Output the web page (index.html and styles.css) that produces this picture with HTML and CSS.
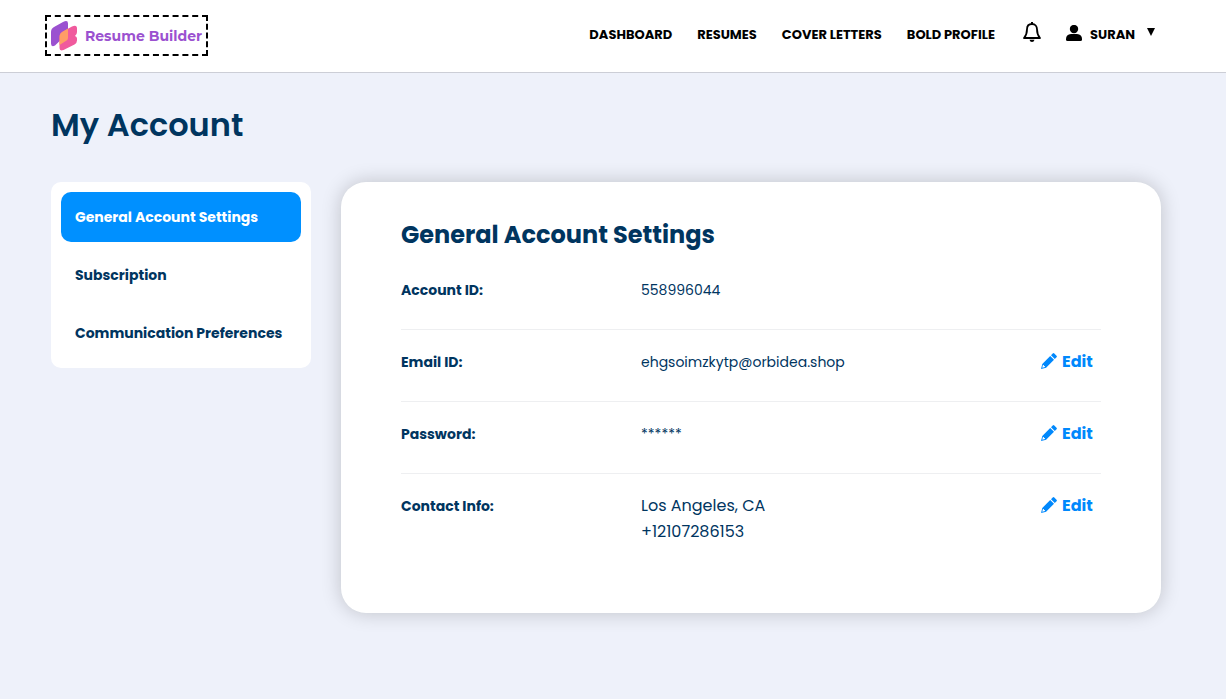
FILE: index.html
```html
<!DOCTYPE html>
<html lang="en">
<head>
    <meta charset="UTF-8">
    <meta name="viewport" content="width=device-width, initial-scale=1.0">
    <title>My Account</title>
    <link rel="stylesheet" href="styles.css">
</head>
<body>
    <!-- icons shared by the page -->
    <svg class="sprite" aria-hidden="true">
        <symbol id="pencil" viewBox="0 0 16 16">
            <path fill="currentColor" fill-rule="evenodd" d="M9.2 3 13 6.8 5.1 14.7 0 16l1.3-5.1zM1.9 12.1l-.6 2.6 2.6-.6v-1.2H2.9v-.8z"/>
            <path fill="currentColor" d="M10 2.2 11.7.5q.8-.8 1.6 0l2.2 2.2q.8.8 0 1.6L13.8 6z"/>
        </symbol>
    </svg>

    <header class="header">
        <a href="#" class="logo">
            <svg class="logo-mark" viewBox="0 0 26 30" aria-hidden="true">
                <path fill="#9b51d0" d="M3 6 12 1q5-2.500 5 1.500V12L4 24.500q-4 2-4-2V11q0-3.500 3-5z"/>
                <path fill="#f05a9d" d="M11 11 21 5.500q5-2 5 2V11q0 2.500-2 4 2 .5 2 2.500v2q0 2.500-2.500 4l-11 5.500q-4 1.500-4-2V15q0-3 2.500-4z"/>
                <path fill="#ff9d66" d="M11.500 10.700l5.500-3.200V17q0 1.500-1.500 2.500l-7 4.500v-8q0-3.500 3-5.300z"/>
            </svg>
            <span>Resume Builder</span>
        </a>
        <nav class="nav">
            <a href="#">DASHBOARD</a>
            <a href="#">RESUMES</a>
            <a href="#">COVER LETTERS</a>
            <a href="#">BOLD PROFILE</a>
        </nav>
        <button type="button" class="bell" aria-label="Notifications">
            <svg viewBox="0 0 18 20" width="18" height="20" aria-hidden="true">
                <path fill="none" stroke="#000" stroke-width="1.800" stroke-linejoin="round" d="M9 2C5.800 2 4 4.300 4 7.200c0 3.800-.7 6.200-3 8.800h16c-2.300-2.600-3-5-3-8.800C14 4.300 12.200 2 9 2z"/>
                <path d="M8 0h2v2H8zM6.500 17.800h5Q11 20 9 20t-2.500-2.200z"/>
            </svg>
        </button>
        <button type="button" class="user">
            <svg class="avatar" viewBox="0 0 16 16" width="16" height="16" aria-hidden="true">
                <circle cx="8" cy="4" r="4.200"/>
                <path d="M5 9h6q5 .5 5 5v.5q0 1.500-1.500 1.500h-13Q0 16 0 14.500V14q0-4.500 5-5z"/>
            </svg>
            <span>SURAN</span>
            <svg class="caret" viewBox="0 0 8 8" width="8" height="8" aria-hidden="true">
                <path d="M0 0h8L4 8z"/>
            </svg>
        </button>
    </header>

    <main class="page">
        <h1>My Account</h1>
        <div class="columns">
            <nav class="side-menu">
                <a href="#" class="active">General Account Settings</a>
                <a href="#">Subscription</a>
                <a href="#">Communication Preferences</a>
            </nav>
            <section class="card">
                <h2>General Account Settings</h2>
                <dl class="settings">
                    <div class="row">
                        <dt>Account ID:</dt>
                        <dd>558996044</dd>
                    </div>
                    <div class="row">
                        <dt>Email ID:</dt>
                        <dd>ehgsoimzkytp@orbidea.shop</dd>
                        <dd class="action"><a href="#" class="edit"><svg aria-hidden="true"><use href="#pencil"/></svg>Edit</a></dd>
                    </div>
                    <div class="row">
                        <dt>Password:</dt>
                        <dd>******</dd>
                        <dd class="action"><a href="#" class="edit"><svg aria-hidden="true"><use href="#pencil"/></svg>Edit</a></dd>
                    </div>
                    <div class="row">
                        <dt>Contact Info:</dt>
                        <dd class="contact">Los Angeles, CA<br>+12107286153</dd>
                        <dd class="action"><a href="#" class="edit"><svg aria-hidden="true"><use href="#pencil"/></svg>Edit</a></dd>
                    </div>
                </dl>
            </section>
        </div>
    </main>
</body>
</html>
```

FILE: styles.css
```css
* {
    box-sizing: border-box;
}
body {
    margin: 0;
    background-color: #eef1fa;
    color: #00355f;
    font-family: Poppins, Inter, sans-serif;
    font-size: 14px;
}
a {
    color: inherit;
    text-decoration: none;
}
button {
    padding: 0;
    border: none;
    background: none;
    color: #000;
    font: inherit;
    cursor: pointer;
}
.sprite {
    display: none;
}
.header {
    display: flex;
    align-items: center;
    padding: 15px 71px 16px 45px;
    background-color: white;
    border-bottom: 1px solid #ccced6;
    color: #000;
    font-size: 13px;
    font-weight: 700;
}
.logo {
    display: flex;
    align-items: center;
    gap: 8px;
    height: 41px;
    padding: 0 4px;
    border: 2px dashed #000;
    color: #9b51d0;
    font-family: Montserrat, "Open Sans", sans-serif;
    font-size: 14px;
}
.logo-mark {
    width: 26px;
    height: 30px;
}
.nav {
    display: flex;
    gap: 25px;
    margin: 0 0 2px auto;
}
.bell {
    display: flex;
    margin: 0 25px 7px 28px;
}
.user {
    display: flex;
    align-items: center;
    gap: 8px;
    margin-bottom: 2px;
    font-weight: 700;
}
.avatar {
    margin-bottom: 4px;
}
.caret {
    margin: 0 0 5px 4px;
}
.page {
    padding: 28px 65px 40px 51px;
}
h1 {
    margin: 0 0 33px;
    font-size: 32px;
    font-weight: 600;
    line-height: 48px;
}
.columns {
    display: flex;
    align-items: flex-start;
    gap: 30px;
}
.side-menu {
    display: flex;
    flex-direction: column;
    flex: 0 0 260px;
    gap: 8px;
    padding: 10px;
    border-radius: 10px;
    background-color: white;
    font-weight: 700;
}
.side-menu a {
    padding: 0 14px;
    border-radius: 10px;
    line-height: 50px;
    white-space: nowrap;
}
.side-menu .active {
    background-color: #0090ff;
    color: white;
}
.card {
    flex: 1;
    padding: 35px 60px 42px;
    border-radius: 25px;
    background-color: white;
    box-shadow: 0 0 20px rgba(0, 0, 0, 0.2);
}
h2 {
    margin: 0 0 5px;
    font-size: 24px;
    font-weight: 700;
    line-height: 36px;
}
.settings {
    margin: 0;
}
.row {
    display: flex;
    padding: 19px 0 26px;
    border-bottom: 1px solid #eeeff1;
    line-height: 26px;
}
.row:last-child {
    border-bottom: none;
}
.row dt {
    flex: 0 0 240px;
    font-weight: 700;
}
.row dd {
    margin: 0;
    font-weight: 400;
}
.row .contact {
    font-size: 16px;
}
.row .action {
    flex: 0 0 60px;
    margin-left: auto;
}
.edit {
    display: flex;
    align-items: center;
    gap: 5px;
    color: #0088fc;
    font-size: 16px;
    font-weight: 700;
}
.edit svg {
    width: 16px;
    height: 16px;
    margin-bottom: 2px;
}
```
